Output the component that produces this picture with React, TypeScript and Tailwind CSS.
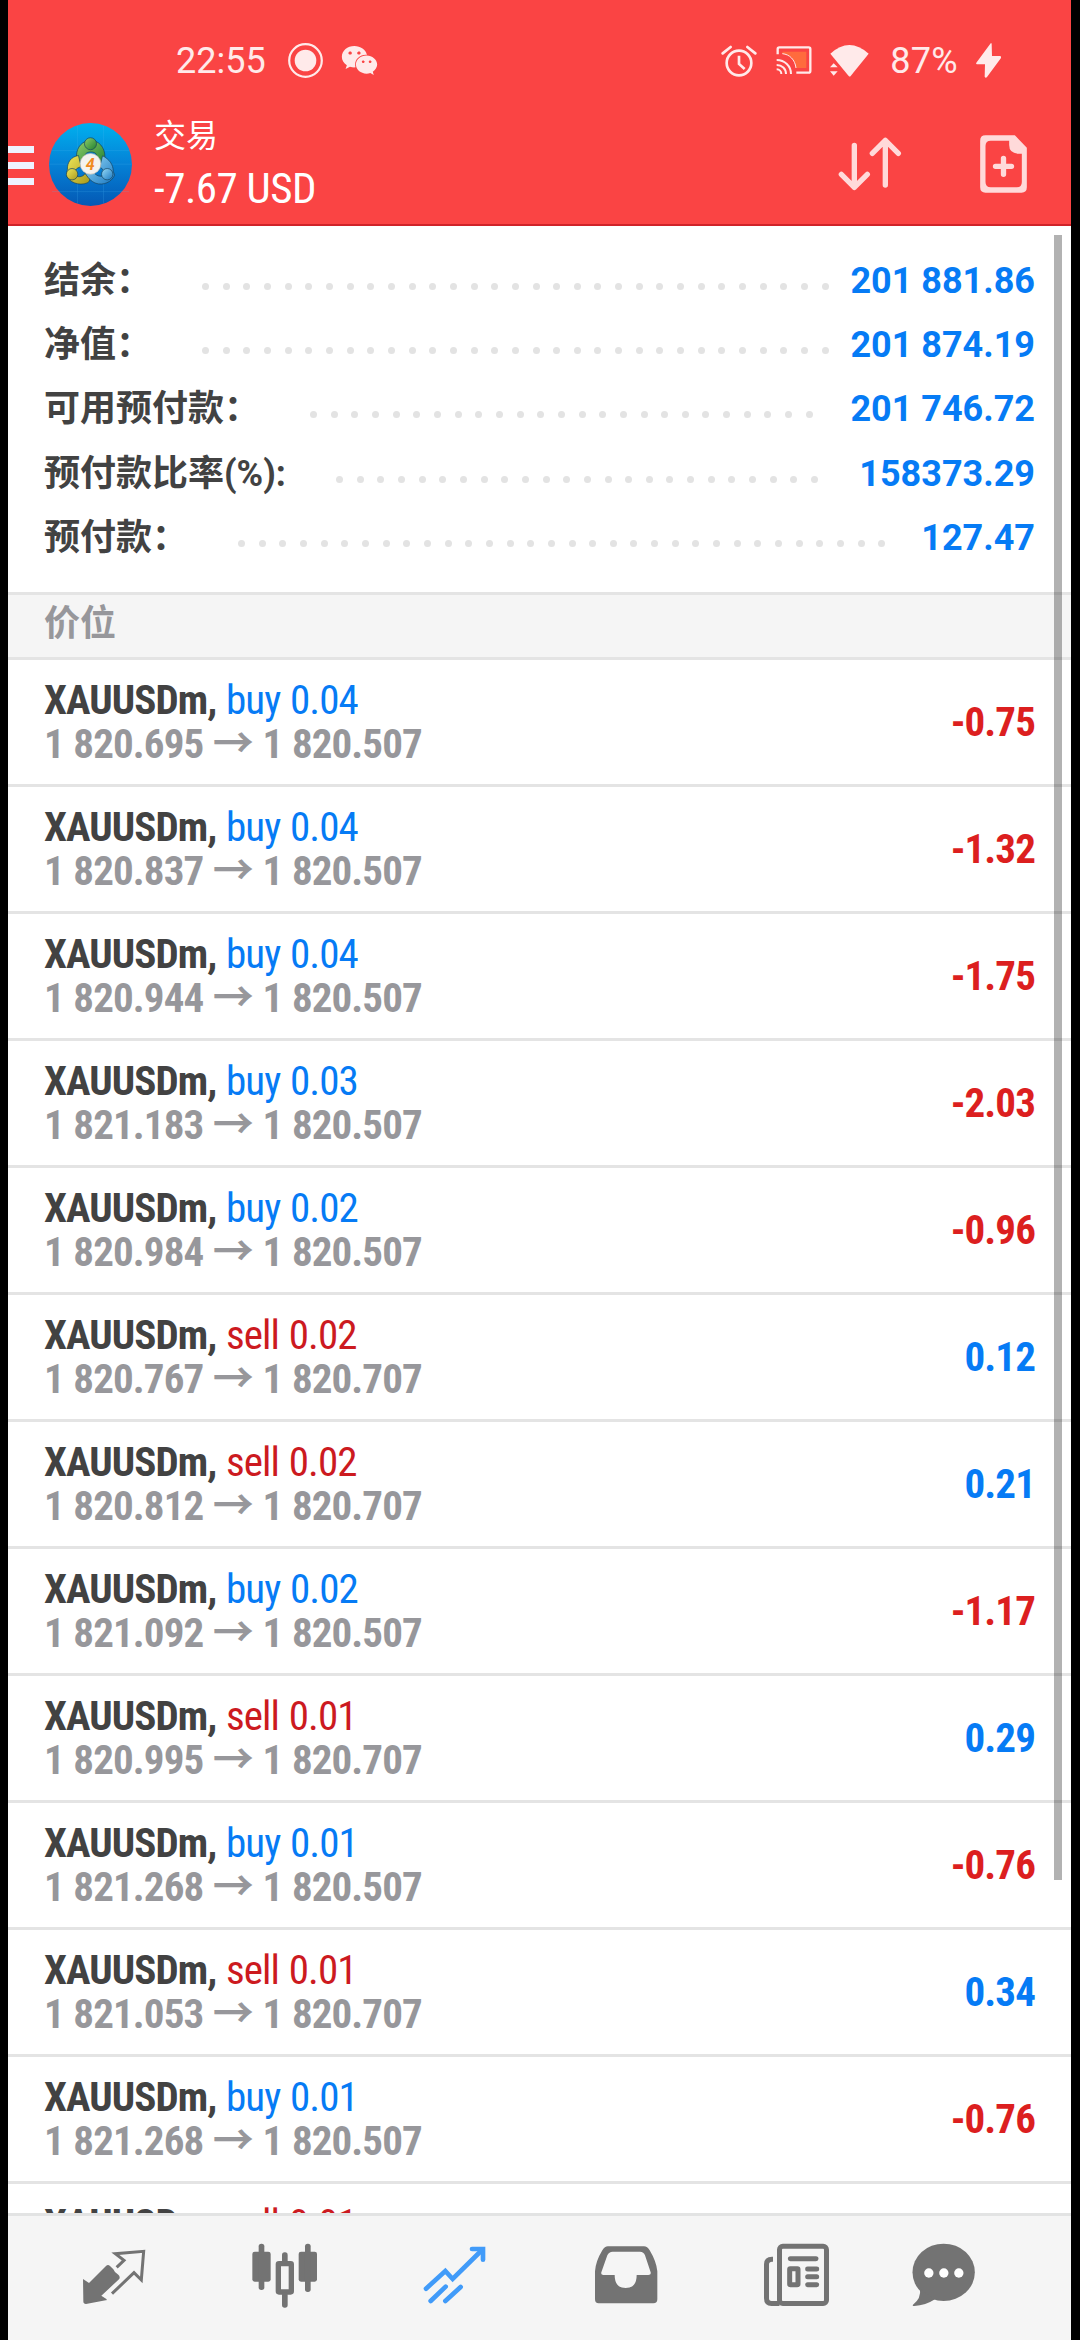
import { FaWeixin } from "react-icons/fa";

type Position = {
  side: "buy" | "sell";
  volume: string;
  open: string;
  current: string;
  profit: string;
};

const summary = [
  { label: "结余：", value: "201 881.86", dots: 31 },
  { label: "净值：", value: "201 874.19", dots: 31 },
  { label: "可用预付款：", value: "201 746.72", dots: 25 },
  { label: "预付款比率(%):", value: "158373.29", dots: 24 },
  { label: "预付款：", value: "127.47", dots: 32 },
];

const positions: Position[] = [
  { side: "buy", volume: "0.04", open: "1 820.695", current: "1 820.507", profit: "-0.75" },
  { side: "buy", volume: "0.04", open: "1 820.837", current: "1 820.507", profit: "-1.32" },
  { side: "buy", volume: "0.04", open: "1 820.944", current: "1 820.507", profit: "-1.75" },
  { side: "buy", volume: "0.03", open: "1 821.183", current: "1 820.507", profit: "-2.03" },
  { side: "buy", volume: "0.02", open: "1 820.984", current: "1 820.507", profit: "-0.96" },
  { side: "sell", volume: "0.02", open: "1 820.767", current: "1 820.707", profit: "0.12" },
  { side: "sell", volume: "0.02", open: "1 820.812", current: "1 820.707", profit: "0.21" },
  { side: "buy", volume: "0.02", open: "1 821.092", current: "1 820.507", profit: "-1.17" },
  { side: "sell", volume: "0.01", open: "1 820.995", current: "1 820.707", profit: "0.29" },
  { side: "buy", volume: "0.01", open: "1 821.268", current: "1 820.507", profit: "-0.76" },
  { side: "sell", volume: "0.01", open: "1 821.053", current: "1 820.707", profit: "0.34" },
  { side: "buy", volume: "0.01", open: "1 821.268", current: "1 820.507", profit: "-0.76" },
  { side: "sell", volume: "0.01", open: "1 821.053", current: "1 820.707", profit: "0.34" },
];

const StatusBar = () => (
  <div className="flex h-[104px] items-center justify-between pt-4 pr-[70px] pl-[168px] text-[36px] text-[#ffeaea]">
    <div className="flex items-center">
      <span className="mt-0.5 w-[112px]">22:55</span>
      <svg className="size-[35px]" viewBox="0 0 35 35" fill="none">
        <circle cx="17.5" cy="17.5" r="16.3" stroke="currentColor" strokeWidth="2.2" />
        <circle cx="17.5" cy="17.5" r="10.8" fill="currentColor" />
      </svg>
      <FaWeixin className="ml-[18px] h-[33px] w-[37px]" />
    </div>
    <div className="flex items-center">
      <svg className="mt-0.5 h-[32px] w-[36px]" viewBox="0 0 108 96" fill="none" stroke="currentColor" strokeWidth="8">
        <circle cx="54" cy="54" r="37" />
        <path d="M54 32v25l17 15" />
        <path d="M5 25 29 6M103 25 79 6" strokeLinecap="round" />
      </svg>
      <svg className="ml-[19px] h-[28px] w-[36px]" viewBox="0 0 106 84" fill="none" stroke="currentColor" strokeWidth="7">
        <path d="M18 17h72v49H60C58 40 40 25 18 24z" fill="#ff6b3d" stroke="none" />
        <path d="M4 25V9q0-5 5-5h88q5 0 5 5v66q0 5-5 5H60" />
        <path d="M1 42c24 0 43 18 43 42M1 57c16 0 28 11 28 27M1 70c8 0 14 6 14 14" strokeWidth="6" />
        <path d="M18 23c22 2 38 18 41 43" strokeWidth="3" />
      </svg>
      <svg className="ml-[18px] h-[33px] w-[39px]" viewBox="0 0 117 99" fill="currentColor">
        <path d="M1 29Q58-23 116 29L62 96q-3 3-6 0z" />
        <path d="M0 70 11 58 23 70zM0 82h23L11 95z" />
      </svg>
      <span className="mt-0.5 ml-[21px] tracking-[0.3px]">87%</span>
      <svg className="ml-[18px] h-[35px] w-[25px]" viewBox="0 0 75 105" fill="currentColor">
        <path d="M43 2 1 59q-2 5 2 5h24l-1 37q3 6 7 1l42-57q1-6-3-6H48L47 3q-1-5-4-1z" />
      </svg>
    </div>
  </div>
);

const AppLogo = () => (
  <svg className="ml-[15px] size-[83px]" viewBox="0 0 248 248">
    <defs>
      <linearGradient id="sky" x1="0" y1="0" x2="0" y2="1">
        <stop offset="0" stopColor="#00b0ee" />
        <stop offset="0.5" stopColor="#0581d6" />
        <stop offset="1" stopColor="#0458b4" />
      </linearGradient>
      <linearGradient id="green" x1="0" y1="0" x2="1" y2="1">
        <stop offset="0" stopColor="#8fce6a" />
        <stop offset="1" stopColor="#1f7f30" />
      </linearGradient>
      <linearGradient id="yellow" x1="0" y1="0" x2="1" y2="1">
        <stop offset="0" stopColor="#efe75a" />
        <stop offset="1" stopColor="#a99a1c" />
      </linearGradient>
      <linearGradient id="blue" x1="0" y1="0" x2="1" y2="1">
        <stop offset="0" stopColor="#9bdcf7" />
        <stop offset="1" stopColor="#1877c2" />
      </linearGradient>
    </defs>
    <circle cx="124" cy="124" r="124" fill="url(#sky)" />
    <path d="M85 8v232M163 8v232M9 82h230M1 123h246M9 205h230" stroke="#4db9f2" strokeWidth="1.5" opacity="0.4" />
    <g stroke="#14405c" strokeWidth="2">
      <path d="M82 100c0-30 20-48 43-48s42 20 42 48c0 14-6 24-12 30l-18-12c4-8 6-16 4-24-2-10-30-10-32 0-1 5 0 10 2 15l-26 5c-2-4-3-9-3-14z" fill="url(#green)" />
      <path d="M88 97c-22 4-34 20-33 42l-3 18c8 20 38 32 62 22 6-2 8-8 8-14l-14-14c-8 12-24 12-30 4-6-10 4-22 18-24z" fill="url(#yellow)" />
      <path d="M160 98c20 10 32 26 32 46l4 12c-8 20-34 32-56 24-14-5-26-18-34-34l22-6c8 14 20 22 32 18 8-4 4-18-8-28z" fill="url(#blue)" />
      <circle cx="124" cy="62" r="18" fill="url(#green)" />
      <circle cx="69" cy="153" r="17" fill="url(#yellow)" />
      <circle cx="174" cy="153" r="17" fill="url(#blue)" />
    </g>
    <circle cx="124" cy="122" r="31" fill="#f4f2ee" stroke="#bdbdb5" strokeWidth="2" />
    <text x="123" y="139" textAnchor="middle" fontSize="48" fontWeight="700" fontStyle="italic" fill="#f08a1f">
      4
    </text>
  </svg>
);

const Header = () => (
  <header className="h-[226px] shrink-0 border-b-2 border-[#cf2329] bg-[#fa4444]">
    <StatusBar />
    <div className="flex h-[120px] items-center pr-[44px] text-white">
      <div className="mt-[3px] flex flex-col gap-[9px]">
        <span className="h-[7px] w-[26px] bg-[#eef3ff]" />
        <span className="h-[7px] w-[26px] bg-[#eef3ff]" />
        <span className="h-[7px] w-[26px] bg-[#eef3ff]" />
      </div>
      <AppLogo />
      <div className="-mt-0.5 ml-[22px] flex-1">
        <div className="text-[32px] leading-[51px]">交易</div>
        <div className="text-[43px] leading-[53px] tracking-[-0.5px] [font-stretch:75%]">-7.67 USD</div>
      </div>
      <svg className="h-[56px] w-[64px] text-[#ffdada]" viewBox="0 0 192 168" fill="none" stroke="currentColor" strokeWidth="16" strokeLinecap="round" strokeLinejoin="round">
        <path d="M49 28v126M10 115l39 39 39-39" />
        <path d="M142 147V13M103 52l39-39 39 39" />
      </svg>
      <svg className="ml-[78px] h-[58px] w-[47px] text-[#ffdada]" viewBox="0 0 140 174" fill="currentColor">
        <path
          fillRule="evenodd"
          d="M16 1h88l36 37v119q0 16-16 16H16Q0 173 0 157V17Q0 1 16 1zM32 17Q16 17 16 33v108q0 16 16 16h78q15 0 15-16V56h-12Q87 54 87 30V17z"
        />
        <path d="M70 70v48M46 94h48" stroke="currentColor" strokeWidth="16" strokeLinecap="round" />
      </svg>
    </div>
  </header>
);

const Summary = () => (
  <section className="pt-[23px] pr-[36px] pb-[22px] pl-[36px] text-[36px] font-bold">
    {summary.map(({ label, value, dots }) => (
      <div key={label} className="flex h-[64.2px] items-center">
        <span className="whitespace-nowrap text-[#424242]">{label}</span>
        <div className="mt-[11px] ml-[50px] flex flex-1 gap-[13.66px]">
          {Array.from({ length: dots }, (_, i) => (
            <span key={i} className="size-[7px] shrink-0 rounded-full bg-[#e3e3e3]" />
          ))}
        </div>
        <span className="whitespace-nowrap text-[#067bf5]">{value}</span>
      </div>
    ))}
  </section>
);

const PositionRow = ({ side, volume, open, current, profit }: Position) => (
  <li className="flex h-[127px] items-center justify-between border-b-3 border-[#e4e4e4] px-9 text-[41px] leading-[44px] font-bold tracking-[-0.9px] [font-stretch:75%] [word-spacing:1px]">
    <div>
      <div className="text-[#424242]">
        XAUUSDm,{" "}
        <span className={side === "buy" ? "font-normal text-[#067bf5]" : "font-normal text-[#cc1a1f]"}>
          {side} {volume}
        </span>
      </div>
      <div className="text-[#97979b]">
        {open} → {current}
      </div>
    </div>
    <span className={profit.startsWith("-") ? "text-[#dc1f1f]" : "text-[#067bf5]"}>{profit}</span>
  </li>
);

const TabBar = () => (
  <nav className="flex h-[127px] shrink-0 items-start gap-[105.5px] border-t-3 border-[#e2e3e3] bg-[#f5f5f5] pt-[27px] pl-[74px] text-[#737373] [&>svg]:h-[66.67px] [&>svg]:w-[65px] [&>svg]:shrink-0 [&>svg]:overflow-visible">
    {/* quotes */}
    <svg viewBox="0 0 195 200" fill="currentColor">
      <path d="M3 108 21 120 72 69q6-6 12 0l10 10q4 11 15 16 7 7 2 14l-53 49 15 10q3 3-2 4l-59 11q-8 0-8-8z" />
      <path d="M104 73l22-21-26-20 85-7-7 86-22-22-66 63" fill="none" stroke="currentColor" strokeWidth="9" />
    </svg>
    {/* charts */}
    <svg viewBox="0 0 195 200" fill="currentColor">
      <rect x="-2" y="26" width="55" height="90" rx="7" />
      <rect x="17" y="2" width="17" height="139" rx="8" />
      <rect x="76" y="62" width="39" height="85" rx="2" fill="none" stroke="currentColor" strokeWidth="16" strokeLinejoin="round" />
      <rect x="87" y="28" width="17" height="34" rx="8" />
      <rect x="87" y="148" width="17" height="46" rx="8" />
      <rect x="137" y="26" width="55" height="90" rx="7" />
      <rect x="156" y="2" width="17" height="145" rx="8" />
    </svg>
    {/* trade, active */}
    <svg viewBox="0 0 195 200" fill="none" stroke="#419bf9" strokeWidth="14" strokeLinecap="round">
      <path d="M9 137 67 84l22 24 88-87" />
      <path d="M147 18h33v32" />
      <path d="M23 174l45-43M67 174l46-42" />
    </svg>
    {/* history */}
    <svg viewBox="0 0 195 200" fill="currentColor">
      <path
        fillRule="evenodd"
        d="M3 169V85Q5 55 25 22 32 10 42 10h108q10 0 17 12 20 33 23 63v84q0 12-12 12H14q-11 0-11-12zM22 88q-2 8 6 8h34q0 39 33 39t33-39h35q9 0 7-8l-17-51q-4-11-15-11H56q-11 0-16 11z"
      />
    </svg>
    {/* news */}
    <svg viewBox="0 0 195 200" fill="none" stroke="currentColor" strokeWidth="15">
      <rect x="46.5" y="10" width="141" height="171.5" rx="10" />
      <path d="M27 49h-3Q7.5 49 7.5 64v102q0 15.5 15 15.5h24" />
      <rect x="77" y="77" width="25" height="48" rx="2" strokeLinejoin="round" />
      <path d="M79 47h77M131 78h27M131 101h27M131 125h27" strokeLinecap="round" />
    </svg>
    {/* messages */}
    <svg className="-ml-6" viewBox="0 0 195 200" fill="currentColor">
      <ellipse cx="98" cy="88" rx="93.5" ry="86" />
      <path d="M27 138q4 28-21 47-3 4 4 4 34-2 62-20z" />
      <g fill="#fff">
        <circle cx="53.5" cy="90" r="14" />
        <circle cx="98.5" cy="90" r="14" />
        <circle cx="143.5" cy="90" r="14" />
      </g>
    </svg>
  </nav>
);

export default function App() {
  return (
    <div className="h-[2340px] w-[1080px] bg-black pr-[9px] pl-2 font-['Roboto','Noto_Sans_CJK_SC',sans-serif]">
      <div className="flex h-full flex-col overflow-hidden bg-white">
        <Header />
        <main className="relative min-h-0 flex-1 overflow-hidden">
          <Summary />
          <h2 className="h-[68px] border-y-3 border-[#e4e4e4] bg-[#f5f5f5] pl-9 text-[36px] leading-[58px] font-bold text-[#97979b]">
            价位
          </h2>
          <ul>
            {positions.map((position, i) => (
              <PositionRow key={i} {...position} />
            ))}
          </ul>
          <div className="absolute top-[9px] right-[9px] h-[1645px] w-2 bg-black/30" />
        </main>
        <TabBar />
      </div>
    </div>
  );
}
